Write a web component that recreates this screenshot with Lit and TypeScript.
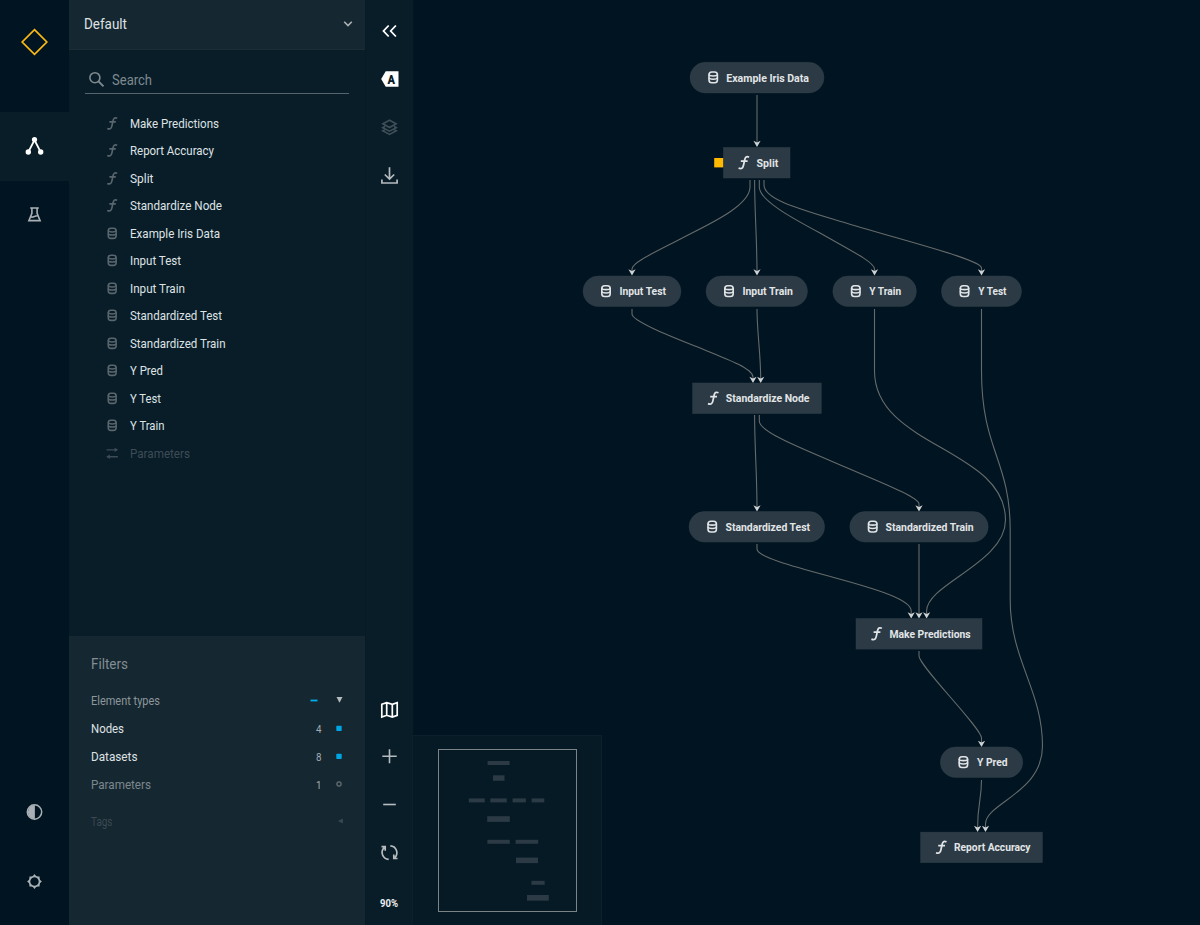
import { LitElement, html, svg, css } from "lit";
import { customElement } from "lit/decorators.js";

// A line of text set to a fixed advance width.
const line = (text: string, width: number, size = 13, cls = "") => html`<svg
  class="line ${cls}" width=${width} height="20" viewBox="0 0 ${width} 20"
><text x="0" y="14.5" font-size=${size} textLength=${width} lengthAdjust="spacingAndGlyphs">${text}</text></svg>`;

const fnGlyph = svg`<path d="M5.3-5.3C2.7-6.6 1.5-5.4 .9-2.8L-.3 2.8C-.9 5.5-2.3 6.8-5.2 5.5M-3-1.5H3.8" fill="none" stroke="currentColor" stroke-width="1.75"/>`;
const dbGlyph = svg`<g fill="none" stroke="currentColor" stroke-width="1.6"><rect x="-4.2" y="-5.4" width="8.4" height="10.8" rx="2.8"/><path d="M-4.2-3.2C-4.2-.9 4.2-.9 4.2-3.2M-4.2.2C-4.2 2.4 4.2 2.4 4.2.2"/></g>`;
const paramGlyph = svg`<path d="M-6-3.7H5M6 3.7H-5" fill="none" stroke="currentColor" stroke-width="1.4"/><path d="M2.5-6L6.4-3.7L2.5-1.4ZM-2.5 1.4L-6.4 3.7L-2.5 6Z" fill="currentColor"/>`;
const glyphs: Record<string, unknown> = { fn: fnGlyph, db: dbGlyph, param: paramGlyph };

const elements: [string, string, number][] = [
  ["fn", "Make Predictions", 89], ["fn", "Report Accuracy", 84], ["fn", "Split", 23.5],
  ["fn", "Standardize Node", 92], ["db", "Example Iris Data", 90], ["db", "Input Test", 51],
  ["db", "Input Train", 55], ["db", "Standardized Test", 92], ["db", "Standardized Train", 95.5],
  ["db", "Y Pred", 33], ["db", "Y Test", 31], ["db", "Y Train", 34.5], ["param", "Parameters", 60],
];

// kind, label, left, right, centre y, icon x, text x, text width
const nodes: [string, string, number, number, number, number, number, number][] = [
  ["db", "Example Iris Data", 690, 824, 77.6, 713.2, 726.3, 82.7],
  ["fn", "Split", 723.4, 790, 162.7, 743.8, 756.6, 21.7],
  ["db", "Input Test", 583, 681, 291.3, 606, 619.4, 46.6],
  ["db", "Input Train", 706, 807.5, 291.3, 729, 742.4, 50.6],
  ["db", "Y Train", 832.8, 916.4, 291.3, 855.8, 869.3, 31.8],
  ["db", "Y Test", 941.4, 1021.5, 291.3, 964.5, 978.2, 28.3],
  ["fn", "Standardize Node", 692.6, 821.3, 398.3, 713.2, 725.8, 83.7],
  ["db", "Standardized Test", 689, 824.6, 526.8, 712.2, 725.5, 84.5],
  ["db", "Standardized Train", 849.8, 988.2, 526.8, 872.7, 885.6, 88],
  ["fn", "Make Predictions", 856, 982, 633.8, 876.6, 889.4, 81.2],
  ["db", "Y Pred", 940.3, 1022.8, 762.3, 963.4, 977, 30.5],
  ["fn", "Report Accuracy", 920.6, 1042.4, 847.4, 941.2, 954, 76.5],
];

const edges = [
  "M757 95V143",
  "M750 180V187C750 204 716 221 690 234C658 251 632 262 632 269V272",
  "M754.6 180C754.6 212 757 240 757 272",
  "M759.3 180V187C759.3 200 790 217 820 233C848 249 874.5 262 874.5 269V272",
  "M764 180V185C764 200 803 210 846 223C912 243 981.5 260 981.5 268V272",
  "M632 309V314C632 321 670 336 695 346C722 357 753 368 753 377V379",
  "M757 309C757 332 760.7 354 760.7 379",
  "M754.6 415C754.6 447 757 475 757 508",
  "M759.3 415V421C759.3 432 803 449 838 464C880 482 919 497 919 504V508",
  "M874.5 309V371C874.5 447 1005.5 448 1005.5 520C1005.5 563 926.6 584 926.6 611V615",
  "M981.5 309V371C981.5 450 1010.2 460 1010.2 530V600C1010.2 660 1042.5 690 1042.5 746C1042.5 793 985.5 803 985.5 824V828",
  "M757 544V549C757 557 795 567 832 577C880 590 911.2 600 911.2 611V615",
  "M919 544V615",
  "M919 651V656C919 666 981.5 728 981.5 738V744",
  "M981.5 780C981.5 800 977.6 803 977.6 828",
];

const tips: [number, number][] = [
  [757, 147], [632, 275.5], [757, 275.5], [874.5, 275.5], [981.5, 275.5], [753, 383], [760.7, 383],
  [757, 511.5], [919, 511.5], [911.2, 618.5], [919, 618.5], [926.6, 618.5], [981.5, 747], [977.6, 832], [985.5, 832],
];

// Minimap blocks: x, y, width, height
const blocks = [
  [487.6, 761, 22, 4], [493, 775.3, 11.5, 5.5], [468.8, 798.4, 16, 4], [490.3, 798.4, 16.5, 4],
  [512.6, 798.4, 13.3, 4], [531.6, 798.4, 12.7, 4], [487.2, 816.2, 22.6, 5.7], [487.4, 839.8, 22.4, 4],
  [515.6, 839.8, 22.6, 4], [516, 857.6, 22, 5.5], [531.4, 880.8, 13.3, 4], [527, 895, 21.8, 5.7],
];

@customElement("app-root")
export class AppRoot extends LitElement {
  static styles = css`
    :host { display: block; font-family: Roboto, "Open Sans", sans-serif; color: #dfe2e4; }
    * { box-sizing: border-box; }
    svg { display: block; flex: none; overflow: visible; }
    text { fill: currentColor; }
    .app { display: grid; grid-template-columns: 69px 296px 48px 1fr; height: 925px; background: #001521; overflow: hidden; }
    .rail { display: flex; flex-direction: column; }
    .cell { height: 69px; display: grid; place-items: center; color: #a9b0b5; padding: 0 1px 2px 0; }
    .brand { height: 112px; padding: 28px 1px 0 0; display: flex; justify-content: center; }
    .active { background: #081d28; color: #fff; }
    .rail-end { margin-top: auto; padding-bottom: 8.5px; }
    .side { background: #081d28; display: flex; flex-direction: column; }
    .pick { height: 50px; background: #152731; border-bottom: 1px solid #1b2d37; display: flex; align-items: center; justify-content: space-between; padding: 0 12px 1px 15px; }
    .search { height: 31px; margin: 13px 16px 0; border-bottom: 1px solid #55646d; display: flex; align-items: center; gap: 7px; padding: 3px 0 0 3px; color: #7f898f; }
    .list { margin: 15px 0 0; padding: 0; list-style: none; }
    .row { height: 27.53px; display: flex; align-items: center; gap: 11px; padding-left: 36px; }
    .row .ic { color: #5a666e; }
    .off, .row.off .ic { color: #3e4c55; }
    .filters { margin-top: auto; height: 289px; background: #152731; padding: 18px 22px 0; }
    .title { height: 22px; color: #838d93; }
    .f { display: grid; grid-template-columns: 1fr 16px 22px; align-items: center; height: 28px; }
    .f .end { justify-self: end; }
    .head { margin-top: 9.5px; color: #8d969b; }
    .dim { color: #7c878d; }
    .tags { margin-top: 9px; color: #3b4952; }
    .count { color: #a4abb0; }
    .tools { background: #081d28; display: flex; flex-direction: column; align-items: center; color: #b5bbbf; border-left: 1px solid #071a25; }
    .tool { height: 48.2px; width: 48px; display: grid; place-items: center; flex: none; padding-right: 1px; }
    .first { margin-top: 7px; }
    .low { margin-top: auto; height: 45px; }
    .on { color: #fff; }
    .faint { color: #3f4e57; }
    .zoomed { height: 49px; padding-top: 3px; color: #eef0f1; }
    .canvas { min-width: 0; }
    .edge { fill: none; stroke: #666a6b; stroke-width: 1.1; }
    .tip { fill: #cfd2d4; }
    .box { fill: #2b3a44; stroke: #33424b; stroke-width: .4; }
    .node { color: #e2e5e7; font-weight: 700; }
    .bold { font-weight: 700; }
  `;

  private icon(body: unknown, size = 24) {
    // Large icons sit half a pixel right of their box, centred in odd-width columns.
    const shift = size >= 24 ? 0.5 : 0;
    return html`<svg class="ic" width=${size} height=${size} viewBox="${-size / 2 - shift} ${-size / 2} ${size} ${size}">${body}</svg>`;
  }

  private rail() {
    return html`<nav class="rail">
      <div class="brand">${this.icon(svg`<path d="M0-12.3L12.3 0L0 12.3L-12.3 0Z" fill="none" stroke="#fdb913" stroke-width="1.7"/>`, 28)}</div>
      <div class="cell active">${this.icon(svg`<path d="M-6.2 6.2L0-6L6.2 6.2" fill="none" stroke="currentColor" stroke-width="1.8"/><g fill="currentColor"><circle cx="0" cy="-6.5" r="2.6"/><circle cx="-6.2" cy="6" r="2.7"/><circle cx="6.2" cy="6" r="2.7"/></g>`)}</div>
      <div class="cell">${this.icon(svg`<path d="M-4.3-7H4.3M-2.6-6.6V-1.6L-5.6 5.6H5.6L2.6-1.6V-6.6M-3.2 2.1C-1 2.6 1 .2 3.4 .9" fill="none" stroke="currentColor" stroke-width="1.6"/>`)}</div>
      <div class="rail-end">
        <div class="cell">${this.icon(svg`<circle r="7.2" fill="none" stroke="currentColor" stroke-width="1.5"/><path d="M.4-7V7A7 7 0 0 1 .4-7Z" fill="currentColor"/>`)}</div>
        <div class="cell">${this.icon(svg`<g transform="translate(0 .5)"><circle r="5" fill="none" stroke="currentColor" stroke-width="1.5"/><path d="M0-7.4L2-5.1L5.1-5.1L5.1-2L7.4 0L5.1 2L5.1 5.1L2 5.1L0 7.4L-2 5.1L-5.1 5.1L-5.1 2L-7.4 0L-5.1-2L-5.1-5.1L-2-5.1ZM4.6 0A4.6 4.6 0 1 0-4.6 0A4.6 4.6 0 1 0 4.6 0Z" fill="currentColor" fill-rule="evenodd"/></g>`)}</div>
      </div>
    </nav>`;
  }

  private filterRow(label: string, width: number, count: string, on: boolean) {
    const mark = on
      ? svg`<rect x="-2.7" y="-2.3" width="5.4" height="5.4" rx=".8" fill="#00a5e3"/>`
      : svg`<rect x="-2" y="-2" width="4" height="4" rx="1" fill="none" stroke="#7c878d"/>`;
    return html`<div class="f ${on ? "" : "dim"}">${line(label, width)}${line(count, 5.5, 10, "end count")}<span class="end">${this.icon(mark, 8)}</span></div>`;
  }

  private side() {
    return html`<aside class="side">
      <div class="pick">${line("Default", 43, 14)}${this.icon(svg`<path d="M-3.8-2.2L0 1.6L3.8-2.2" fill="none" stroke="#aab1b5" stroke-width="1.6"/>`, 10)}</div>
      <div class="search">${this.icon(svg`<circle cx="-1.6" cy="-1.8" r="5" fill="none" stroke="currentColor" stroke-width="1.6"/><path d="M2 1.9L7 6.9" stroke="currentColor" stroke-width="1.9"/>`, 17)}${line("Search", 40, 14)}</div>
      <ul class="list">${elements.map(([kind, name, w]) => html`<li class="row ${kind === "param" ? "off" : ""}">${this.icon(svg`<g transform="translate(.2 .3) scale(.94)">${glyphs[kind]}</g>`, 14)}${line(name, w)}</li>`)}</ul>
      <section class="filters">
        <div class="title">${line("Filters", 37, 14)}</div>
        <div class="f head">${line("Element types", 69, 12.5)}<span class="end">${this.icon(svg`<path d="M-6.5 .5H.5" stroke="#00b0ee" stroke-width="1.8"/>`, 8)}</span><span class="end">${this.icon(svg`<path d="M-2.5-3H3.5L.5 2.8Z" fill="#b4babd"/>`, 8)}</span></div>
        ${this.filterRow("Nodes", 33, "4", true)}
        ${this.filterRow("Datasets", 46.5, "8", true)}
        ${this.filterRow("Parameters", 60, "1", false)}
        <div class="f tags">${line("Tags", 21.5, 12.5)}<span></span><span class="end">${this.icon(svg`<path d="M3.8-2.6V2.6L-1 0Z" fill="currentColor"/>`, 8)}</span></div>
      </section>
    </aside>`;
  }

  private tools() {
    return html`<div class="tools">
      <div class="tool first on">${this.icon(svg`<path d="M-.8-5.5L-6 0L-.8 5.5M6.4-5.5L1.2 0L6.4 5.5" fill="none" stroke="currentColor" stroke-width="1.8"/>`)}</div>
      <div class="tool on">${this.icon(svg`<path d="M-8.3 0L-3.8-7.8H9V7.8H-3.8Z" fill="currentColor"/><text x="-2" y="4.8" font-size="12.5" font-weight="900" style="fill:#081d28" textLength="7.5" lengthAdjust="spacingAndGlyphs">A</text>`)}</div>
      <div class="tool faint">${this.icon(svg`<path d="M0-6.8L6.6-3.2L0 .5L-6.6-3.2ZM-4.4-.8L-6.8.6L0 4.2L6.8.6L4.4-.8M-4.4 2.6L-6.8 3.8L0 7.4L6.8 3.8L4.4 2.6" fill="none" stroke="currentColor" stroke-width="1.6"/>`)}</div>
      <div class="tool">${this.icon(svg`<path d="M0-8.8V3M-4.7-1.5L0 3.1L4.7-1.5M-7.6 3.5V7H7.6V3.5" fill="none" stroke="currentColor" stroke-width="1.7"/>`)}</div>
      <div class="tool on low">${this.icon(svg`<path transform="translate(0 .8)" d="M-7.7-5.5L-2.8-7.2L2.8-5.5L7.7-7.2V5.5L2.8 7.3L-2.8 5.5L-7.7 7.2ZM-2.8-7V5.5M2.8-5.5V7.2" fill="none" stroke="currentColor" stroke-width="1.7"/>`)}</div>
      <div class="tool">${this.icon(svg`<path d="M-7.2 .3H7.2M0-6.7V7.3" stroke="currentColor" stroke-width="1.6"/>`)}</div>
      <div class="tool">${this.icon(svg`<path d="M-6.3 .5H6.3" stroke="currentColor" stroke-width="1.6"/>`)}</div>
      <div class="tool">${this.icon(svg`<path transform="translate(0 .6)" d="M-.8 6.8A6.9 6.9 0 0 1-5.3-5M.8-6.8A6.9 6.9 0 0 1 5.3 5M-8-5.9H-4.3V-1.8M8 5.9H4.3V1.8" fill="none" stroke="currentColor" stroke-width="1.7"/>`)}</div>
      <div class="tool zoomed">${line("90%", 18, 11, "bold")}</div>
    </div>`;
  }

  private graph() {
    return svg`
      ${edges.map((d) => svg`<path class="edge" d=${d}/>`)}
      ${tips.map(([x, y]) => svg`<path class="tip" transform="translate(${x} ${y})" d="M0 0L-3.6-6.2L0-4.5L3.6-6.2Z"/>`)}
      <rect x="714.2" y="158" width="9.4" height="9.4" fill="#ffb900"/>
      ${nodes.map(([kind, name, l, r, y, ix, tx, w]) => svg`<g class="node">
        <rect class="box" x=${l} y=${y - 15.3} width=${r - l} height="30.6" rx=${kind === "db" ? 15.3 : 0}/>
        <g transform="translate(${ix} ${y - 0.2})">${glyphs[kind]}</g>
        <text x=${tx} y=${y + 4} font-size="11" textLength=${w} lengthAdjust="spacingAndGlyphs">${name}</text>
      </g>`)}
      <rect x="412.5" y="735.5" width="189" height="190" fill="#051a25" stroke="#0b202b"/>
      <rect x="438.5" y="749.5" width="138" height="162" fill="none" stroke="#7b8386"/>
      ${blocks.map(([x, y, w, h]) => svg`<rect x=${x} y=${y} width=${w} height=${h} fill="#2b3a44"/>`)}`;
  }

  render() {
    return html`<div class="app">
      ${this.rail()}${this.side()}${this.tools()}
      <main class="canvas"><svg width="787" height="925" viewBox="413 0 787 925">${this.graph()}</svg></main>
    </div>`;
  }
}
